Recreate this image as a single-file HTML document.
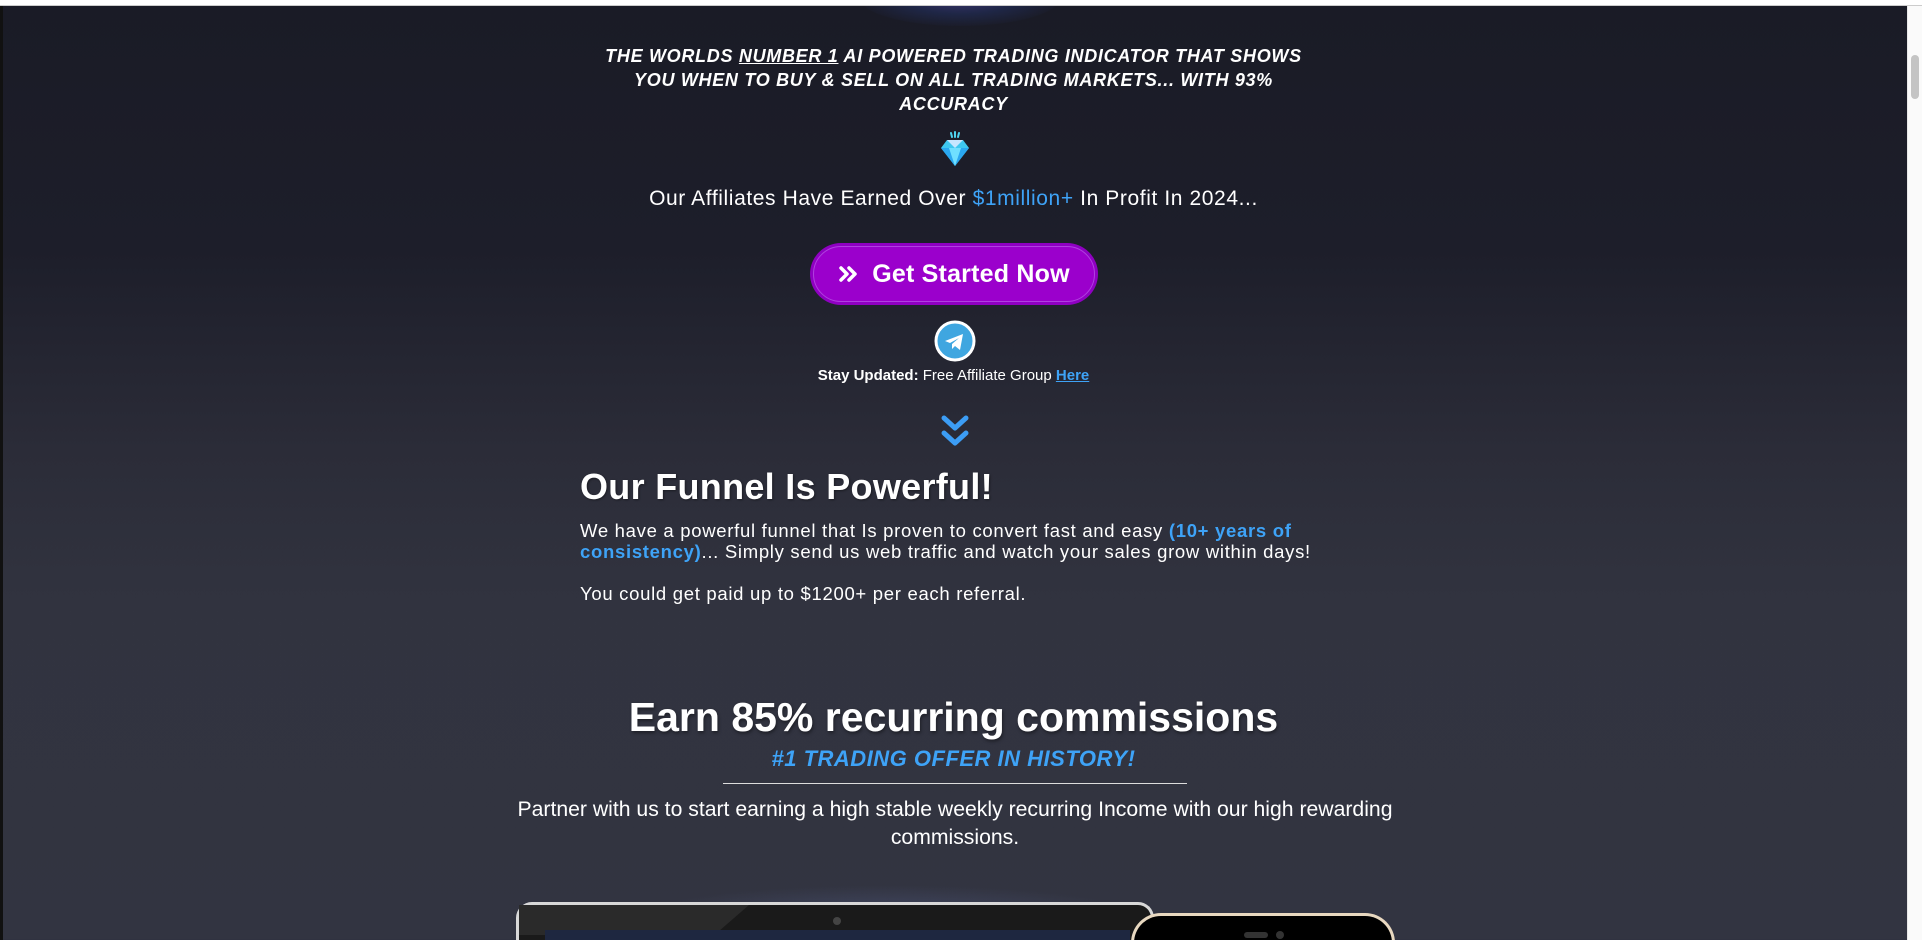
<!DOCTYPE html>
<html><head><meta charset="utf-8"><style>
*{margin:0;padding:0;box-sizing:border-box}
html,body{width:1922px;height:940px;overflow:hidden}
body{position:relative;font-family:"Liberation Sans",sans-serif;color:#fff;
background:linear-gradient(180deg,#1a1b26 0px,#1d1e2a 250px,#2b2c38 450px,#31333f 600px,#323441 940px);}
.a{position:absolute}
.c{left:0;width:1907px;text-align:center}
</style></head><body>
<div class="a" style="left:860px;top:-30px;width:200px;height:56px;border-radius:50%;background:radial-gradient(ellipse,rgba(80,70,160,.6) 0%,rgba(40,60,130,.35) 40%,rgba(30,30,50,0) 75%)"></div>
<div class="a" style="left:0;top:0;width:1922px;height:6px;background:#fff;border-bottom:1px solid #ccc"></div>
<div class="a" style="left:0;top:6px;width:3px;height:934px;background:#111"></div>
<div class="a" style="right:0;top:6px;width:15px;height:934px;background:#fafafa;border-left:1px solid #e8e8e8"></div>
<div class="a" style="left:1911px;top:55px;width:8px;height:44px;border-radius:4px;background:#c4c4c4"></div>

<div class="a c" style="top:44px;font-size:18px;line-height:24px;font-weight:bold;font-style:italic;letter-spacing:0.7px">THE WORLDS <u>NUMBER 1</u> AI POWERED TRADING INDICATOR THAT SHOWS<br>YOU WHEN TO BUY &amp; SELL ON ALL TRADING MARKETS... WITH 93%<br>ACCURACY</div>

<svg class="a" style="left:938px;top:131px" width="34" height="36" viewBox="0 0 34 36">
<path d="M13 2l1 4M17 1v5M21 2l-1 4" stroke="#4fd4f0" stroke-width="2" stroke-linecap="round"/>
<path d="M9 9h16l6 8-14 18L3 17z" fill="#3ec8f0"/>
<path d="M9 9h16l-8 8z" fill="#c6e6ff"/>
<path d="M3 17h28L17 35z" fill="#2aa8f0"/>
<path d="M11 17h12l-6 18z" fill="#6fe0ff"/>
</svg>

<div class="a c" style="top:186px;font-size:21px;line-height:26px;letter-spacing:0.6px">Our Affiliates Have Earned Over <span style="color:#3ea3f7">$1million+</span> In Profit In 2024...</div>

<div class="a" style="left:810px;top:243px;width:288px;height:62px;border-radius:31px;background:#8f00c2;padding:3px">
<div style="width:100%;height:100%;border-radius:28px;background:#9b00cc;border:1px solid #b040e0;display:flex;align-items:center;justify-content:center;font-size:25px;font-weight:bold;letter-spacing:0.2px">
<svg width="22" height="18" viewBox="0 0 22 18" style="margin-right:12px"><path d="M3 3l6 6-6 6M11 3l6 6-6 6" stroke="#fff" stroke-width="3.5" fill="none" stroke-linecap="round" stroke-linejoin="round"/></svg>Get Started Now</div></div>

<svg class="a" style="left:934px;top:320px" width="42" height="42" viewBox="0 0 42 42">
<circle cx="21" cy="21" r="19" fill="#3fa6e0" stroke="#fff" stroke-width="3"/>
<path d="M11 21l18-7-3 16-5-4-3 3v-5l7-6-9 5z" fill="#fff"/>
</svg>
<div class="a c" style="top:366px;font-size:15px;line-height:20px"><b>Stay Updated:</b> Free Affiliate Group <b style="color:#3ea3f7;text-decoration:underline">Here</b></div>

<svg class="a" style="left:939px;top:413px" width="32" height="36" viewBox="0 0 32 36"><path d="M5 5l11 10 11-10M5 20l11 10 11-10" stroke="#3c9df5" stroke-width="5" fill="none" stroke-linecap="round" stroke-linejoin="round"/></svg>

<div class="a" style="left:580px;top:465px;font-size:36px;line-height:44px;font-weight:bold;letter-spacing:0.3px;text-shadow:1px 1px 2px rgba(0,0,0,.4)">Our Funnel Is Powerful!</div>
<div class="a" style="left:580px;top:520px;width:800px;font-size:18.5px;line-height:21px;letter-spacing:0.7px">We have a powerful funnel that Is proven to convert fast and easy <b style="color:#3ea3f7">(10+ years of<br>consistency)</b>... Simply send us web traffic and watch your sales grow within days!<br><br>You could get paid up to $1200+ per each referral.</div>

<div class="a c" style="top:691px;font-size:41px;line-height:52px;font-weight:bold;text-shadow:1px 2px 3px rgba(0,0,0,.4)">Earn 85% recurring commissions</div>
<div class="a c" style="top:745px;font-size:22px;line-height:28px;font-weight:bold;font-style:italic;color:#3ea3f7;letter-spacing:0.5px">#1 TRADING OFFER IN HISTORY!</div>
<div class="a" style="left:723px;top:783px;width:464px;height:1px;background:#ddd"></div>
<div class="a c" style="top:796px;font-size:21.2px;line-height:28px;left:490px;width:930px">Partner with us to start earning a high stable weekly recurring Income with our high rewarding commissions.</div>

<div class="a" style="left:640px;top:885px;width:500px;height:60px;border-radius:50%;background:radial-gradient(ellipse,rgba(80,90,130,.5),rgba(50,52,65,0) 70%)"></div>
<div class="a" style="left:516px;top:902px;width:638px;height:60px;border-radius:16px 16px 0 0;background:#1a1a1a;border:3px solid #d8d8d8;border-bottom:none">
<div style="position:absolute;left:0;top:0;width:230px;height:30px;background:#2a2a2a;clip-path:polygon(0 0,100% 0,85% 100%,0 100%)"></div>
<div style="position:absolute;left:314px;top:12px;width:8px;height:8px;border-radius:50%;background:#444"></div>
<div style="position:absolute;left:26px;top:25px;width:585px;height:40px;background:#1e2740"></div>
</div>
<div class="a" style="left:1131px;top:913px;width:264px;height:60px;border-radius:30px 30px 0 0;background:#000;border:3px solid #e8d8c0;border-bottom:none">
<div style="position:absolute;left:110px;top:16px;width:24px;height:6px;border-radius:3px;background:#333"></div>
<div style="position:absolute;left:142px;top:15px;width:8px;height:8px;border-radius:50%;background:#333"></div>
</div>
</body></html>
